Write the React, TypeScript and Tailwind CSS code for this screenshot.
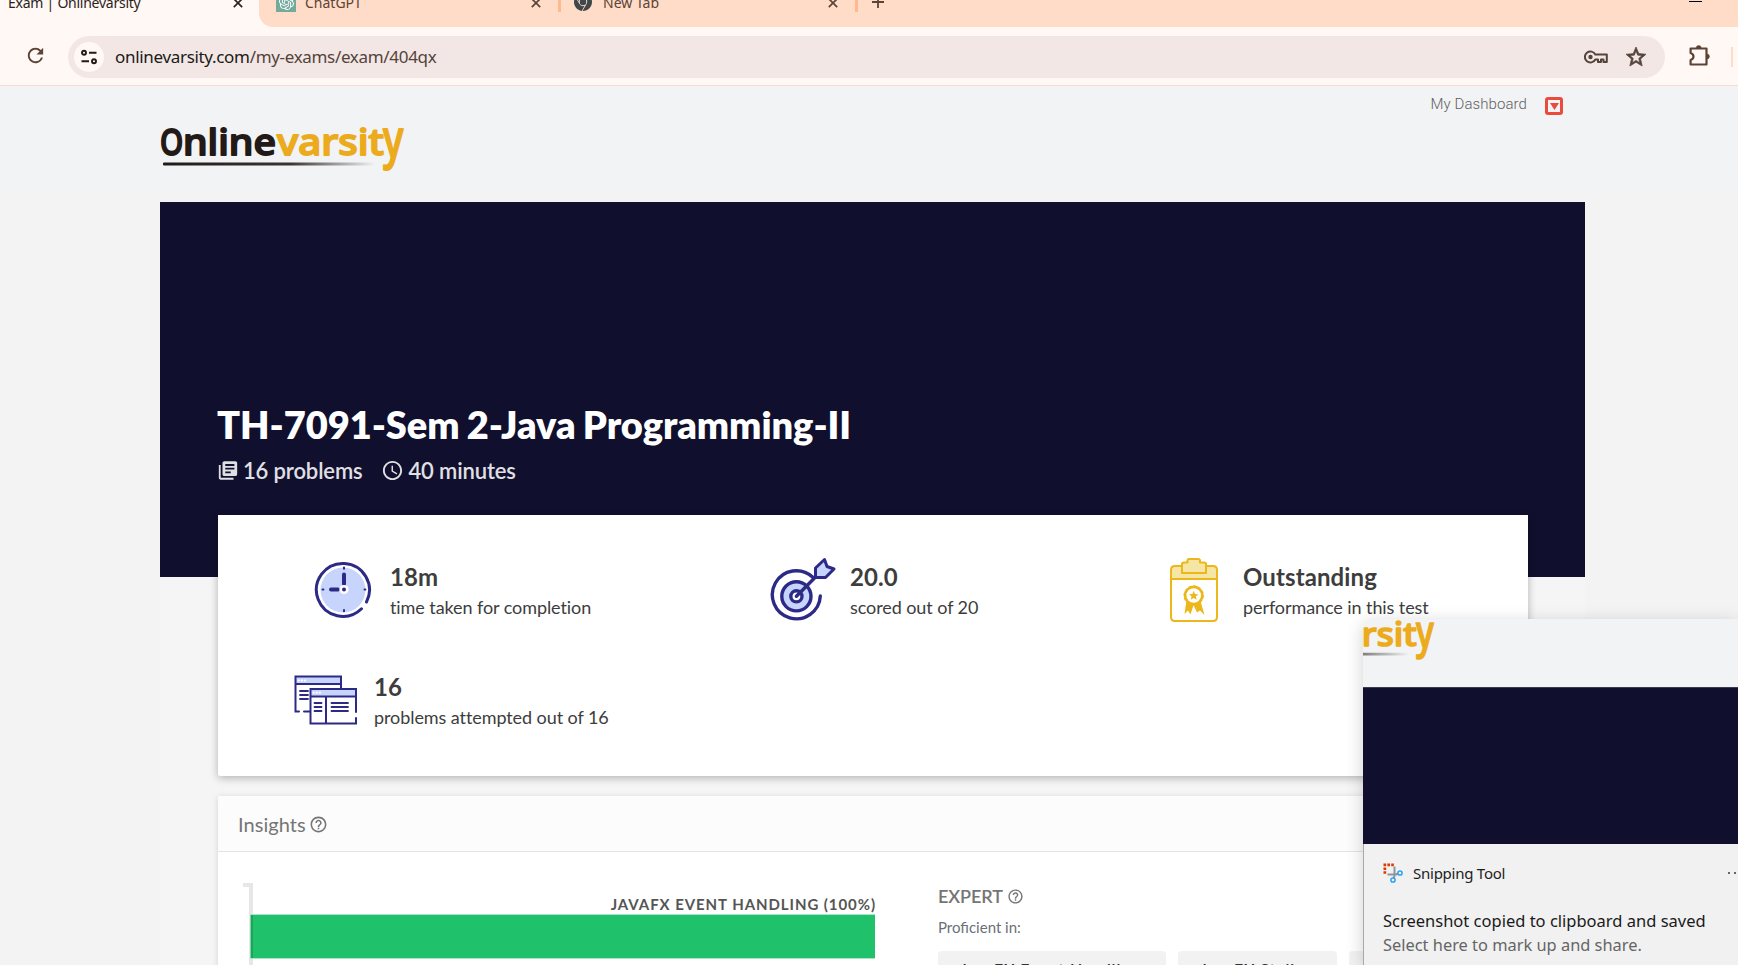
import type { ReactNode } from "react";
import { MdRefresh, MdStarOutline, MdLibraryBooks, MdAccessTime, MdHelpOutline } from "react-icons/md";
import { SiOpenai, SiGooglechrome } from "react-icons/si";

const UI = "font-['Noto_Sans',sans-serif]";

function CloseIcon({ className }: { className: string }) {
  return (
    <svg viewBox="0 0 10 10" className={className} fill="none" stroke="currentColor" strokeWidth="1.7">
      <path d="M0.8 0.8 9.2 9.2M9.2 0.8 0.8 9.2" />
    </svg>
  );
}

function Logo({ id, className }: { id: string; className: string }) {
  return (
    <svg viewBox="0 0 246 48" className={className}>
      <defs>
        <linearGradient id={id} x1="0" x2="1" y1="0" y2="0">
          <stop offset="0" stopColor="#231a17" />
          <stop offset="0.6" stopColor="#3a3432" />
          <stop offset="1" stopColor="#3a3432" stopOpacity="0" />
        </linearGradient>
      </defs>
      <g fontFamily="'Noto Sans', sans-serif" fontSize="37" fontWeight="500" strokeLinejoin="round" strokeWidth="1.8">
        <g fill="#231a17" stroke="#231a17">
          <text transform="translate(0 29.500) scale(0.8 1)">O</text>
          <text x="23" y="29.500" textLength="93" lengthAdjust="spacingAndGlyphs">nline</text>
        </g>
        <g fill="#ecab1d" stroke="#ecab1d">
          <text x="117" y="29.500" textLength="107" lengthAdjust="spacingAndGlyphs">varsit</text>
          <text transform="translate(223 31.500) scale(0.74 1)" fontSize="52">y</text>
        </g>
      </g>
      <rect x="3" y="37.5" width="212" height="3" rx="1" fill={`url(#${id})`} />
    </svg>
  );
}

function ClockIcon() {
  return (
    <svg viewBox="0 0 58 58" className="h-[58px] w-[58px]" fill="none" stroke="#2c2a86" strokeLinecap="round">
      <circle cx="29" cy="29" r="22.5" fill="#c7d5fd" stroke="none" />
      <path d="M47.5 47.8A26.5 26.5 0 1 1 52.500 41" strokeWidth="3" />
      <path d="M30 13.5V23M17 28.5H24" strokeWidth="4" />
      <path d="M30 6.5v1.2M30 49v1.2M8.500 28.5h.9M50.5 28.5h.9" strokeWidth="2" />
      <circle cx="30" cy="28.5" r="4.6" fill="#fff" stroke="none" />
      <circle cx="30" cy="28.5" r="2" fill="#2c2a86" stroke="none" />
    </svg>
  );
}

function TargetIcon() {
  return (
    <svg viewBox="0 0 66 66" className="h-[66px] w-[66px]" fill="none" stroke="#2c2a86" strokeWidth="3.4" strokeLinecap="round" strokeLinejoin="round">
      <path d="M42.5 20A24 24 0 1 0 50.3 39" />
      <circle cx="26.4" cy="39.3" r="14.6" fill="#c7d5fd" />
      <circle cx="26.4" cy="39.3" r="5.6" fill="#fff" />
      <path d="M26.4 39.3 46 19.5" />
      <path d="M45.5 20.5V11L54.5 2.5 57 9.5 64 12 55.5 20.5Z" fill="#c7d5fd" strokeWidth="3" />
    </svg>
  );
}

function ClipboardIcon() {
  return (
    <svg viewBox="0 0 48 66" className="h-[66px] w-[48px]" fill="none" stroke="#ecb71b" strokeWidth="2" strokeLinejoin="round">
      <path d="M1 22V13Q1 9 5 9H43Q47 9 47 13V22Z" fill="#f6e6a5" />
      <path d="M1 22V60Q1 64 5 64H43Q47 64 47 60V22Z" fill="#fff" />
      <path d="M12 16V7Q12 5.500 14 5.500H17.500V3.500Q17.500 2 19 2H28Q30 2 30 3.500V5.500H34Q36 5.500 36 7V16Z" fill="#f6e6a5" />
      <path d="M16.500 43 14.500 57 18 53.500 20.500 57.500 23.500 48 27 55.500 30 53.500 34.500 58 30.500 44Z" fill="#ecb71b" stroke="none" />
      <circle cx="23.700" cy="38.500" r="8.600" fill="#fff" strokeWidth="2.600" />
      <circle cx="23.700" cy="38.500" r="9.700" strokeWidth="1" strokeDasharray="3 2" />
      <path d="M23.700 33.800 25 37 28.400 37.200 25.800 39.400 26.600 42.700 23.700 40.900 20.800 42.700 21.600 39.400 19 37.200 22.400 37Z" fill="#ecb71b" stroke="none" />
    </svg>
  );
}

function WindowsIcon() {
  return (
    <svg viewBox="0 0 63 50" className="h-[50px] w-[63px]" fill="none" stroke="#2c2a86" strokeWidth="2" strokeLinecap="round">
      <path d="M2 2H47V9H2Z" fill="#c7d5fd" stroke="none" />
      <path d="M5 36.500H1.500V1.500H47V14M1.500 9H47M10 36.500H16" />
      <path d="M6 16h8M6 20h8M6 24h8" strokeWidth="1.800" />
      <path d="M16 14H62V48.500H16Z" fill="#fff" stroke="none" />
      <path d="M17 15H61V21H17Z" fill="#c7d5fd" stroke="none" />
      <path d="M62 37V14H16.500V48.500H62V43M16.500 21.500H62M32 21.500V48.500" />
      <path d="M20.500 28h7M20.500 32h7M20.500 36h7M37.500 28h16.500M37.500 32h16.500M37.500 36h16.500" strokeWidth="1.800" />
      <path d="M4.500 5.500h7M19.500 17.700h7" stroke="#fff" strokeWidth="1.800" strokeDasharray="0.5 2.600" />
    </svg>
  );
}

function SnipIcon() {
  return (
    <svg viewBox="0 0 20 20" className="h-5 w-5" fill="none">
      <path d="M0.500 1.800H3.200M4.400 1.800H7M8.200 1.800H10.800" stroke="#d83b01" strokeWidth="2.700" />
      <path d="M1.850 4.400V7M1.850 8.200V10.800" stroke="#d83b01" strokeWidth="2.700" />
      <path d="M11.500 3.500V13L10.500 15M4.500 11.500H13L15 10.500" stroke="#8d949b" strokeWidth="2" />
      <circle cx="17" cy="10" r="2.100" stroke="#2aa4ee" strokeWidth="1.500" />
      <circle cx="10" cy="17" r="2.100" stroke="#2aa4ee" strokeWidth="1.500" />
    </svg>
  );
}

function KeyIcon({ className }: { className: string }) {
  return (
    <svg viewBox="0 0 24 14" className={className} fill="none" stroke="currentColor" strokeWidth="2" strokeLinejoin="round">
      <path d="M11.300 4.500A5.500 5.500 0 1 0 11.300 9.500H14V12H17V9.500H19.500V12H22.800V4.500Z" />
      <circle cx="6.500" cy="7" r="2.200" fill="currentColor" stroke="none" />
    </svg>
  );
}

function Stat({ icon, value, label, gap }: { icon: ReactNode; value: string; label: string; gap: string }) {
  return (
    <div className={`flex items-start ${gap}`}>
      {icon}
      <div className="mt-[4px] whitespace-nowrap text-[#3d3d3d] [font-variant-ligatures:none]">
        <div className="text-[24px] font-bold leading-[32px] tracking-[0.1px]">{value}</div>
        <div className="text-[18px] leading-[28px] tracking-[-0.08px]">{label}</div>
      </div>
    </div>
  );
}

function BrowserChrome() {
  return (
    <header className={`${UI} h-[86px] shrink-0 border-b border-[#f6dcd4] bg-[#fff8f5]`}>
      <div className="flex h-[27px] overflow-hidden text-[14px] leading-[14px] text-[#5c4336]">
        <div className="flex w-[259px] shrink-0 justify-between pl-[8px] pr-[16px] text-[#2b2220]">
          <span className="-mt-[4px] tracking-[-0.25px]">Exam | Onlinevarsity</span>
          <CloseIcon className="-mt-[2px] h-[10px] w-[10px]" />
        </div>
        <div className="flex flex-1 rounded-bl-[14px] bg-[#ffdcc7]">
          <div className="flex h-[12px] w-[302px] border-r-[3px] border-[#ffb98c] pl-[17px]">
            <span className="-mt-[8px] flex h-[20px] w-[20px] items-center justify-center bg-[#74aa9c] text-white">
              <SiOpenai className="h-[15px] w-[15px]" />
            </span>
            <span className="-mt-[4px] ml-[9px] flex-1">ChatGPT</span>
            <CloseIcon className="-mt-[2px] mr-[17px] h-[10px] w-[10px]" />
          </div>
          <div className="flex h-[12px] w-[297px] border-r-[3px] border-[#ffb98c] pl-[13px]">
            <SiGooglechrome className="-mt-[7px] h-[18px] w-[18px] text-[#3f474b]" />
            <span className="-mt-[4px] ml-[11px] flex-1">New Tab</span>
            <CloseIcon className="-mt-[2px] mr-[17px] h-[10px] w-[10px]" />
          </div>
          <svg viewBox="0 0 12 12" className="-mt-[4px] ml-[14px] h-[12px] w-[12px]" stroke="currentColor" strokeWidth="1.800">
            <path d="M6 0V12M0 6H12" />
          </svg>
          <div className="ml-auto mr-[36px] mt-px h-px w-[13px] bg-black" />
        </div>
      </div>
      <div className="flex h-[58px] items-center pt-px">
        <MdRefresh className="-mt-[2px] ml-[24px] h-[23px] w-[23px] text-[#5c4336]" />
        <div className="ml-[21px] flex h-[42px] w-[1597px] items-center rounded-full bg-[#f2e7e4] pl-[6px] pr-[17px]">
          <div className="flex h-[30px] w-[30px] items-center justify-center rounded-full bg-[#fff8f5]">
            <svg viewBox="0 0 16 16" className="h-[16px] w-[16px]" fill="none" stroke="#231a17" strokeWidth="1.900">
              <circle cx="3" cy="3.700" r="2" />
              <path d="M8 3.700H15.500M0.500 12.300H8" />
              <circle cx="13" cy="12.300" r="2" />
            </svg>
          </div>
          <div className="ml-[11px] flex-1 text-[17px] leading-[24px] tracking-[-0.32px] text-[#54433b]">
            <span className="text-[#201a18]">onlinevarsity.com</span>/my-exams/exam/404qx
          </div>
          <KeyIcon className="mr-[16px] h-[14px] w-[24px] text-[#54433b]" />
          <MdStarOutline className="h-[24px] w-[24px] stroke-[#54433b] stroke-[0.7] text-[#54433b]" />
        </div>
        <svg viewBox="0 0 22 22" className="-mt-[2px] ml-[24px] h-[22px] w-[22px]" fill="none" stroke="#5c4336" strokeWidth="2.200" strokeLinejoin="round">
          <path d="M1.600 3.500H17.500V19.500H1.600V15Q4.500 14 4.500 11.500T1.600 8Z" />
          <path d="M7.200 3a2.500 2.500 0 0 1 5 0ZM18 9a2.500 2.500 0 0 1 0 5Z" fill="#5c4336" strokeWidth="0.500" />
        </svg>
        <div className="ml-[20px] h-[20px] w-[2px] bg-[#ffdcc7]" />
      </div>
    </header>
  );
}

function Toast() {
  return (
    <aside className={`${UI} absolute left-[1363px] top-[619px] h-[346px] w-[375px] overflow-hidden rounded-tl-[9px] bg-[#f1f1f1] shadow-[0_4px_18px_rgba(0,0,0,0.18)]`}>
      <div className="h-[68px] overflow-hidden bg-[#f2f3f5]">
        <Logo id="toastRule" className="-ml-[142px] mt-[1px] h-[42px] w-[215px]" />
      </div>
      <div className="h-[157px] border-t border-[#3b3b56] bg-[#10102e]" />
      <div className="h-[121px] border-l border-[#a9a9a9] pl-[19px] pt-[17px]">
        <div className="flex h-[24px] items-center">
          <SnipIcon />
          <span className="ml-[10px] flex-1 text-[15px] tracking-[-0.25px] text-[#1d1d1d]">Snipping Tool</span>
          <span className="mr-[2px] flex gap-[4px]">
            <i className="h-[2px] w-[2px] bg-[#666]" />
            <i className="h-[2px] w-[2px] bg-[#666]" />
          </span>
        </div>
        <div className="mt-[24px] whitespace-nowrap text-[16.500px] leading-[24px] text-[#1a1a1a]">Screenshot copied to clipboard and saved</div>
        <div className="whitespace-nowrap text-[16.400px] leading-[24px] text-[#656565]">Select here to mark up and share.</div>
      </div>
    </aside>
  );
}

export default function App() {
  return (
    <div className="relative flex h-[965px] w-[1738px] flex-col overflow-hidden bg-[#f3f3f3] font-[Lato,sans-serif]">
      <BrowserChrome />

      <div className="flex h-[104px] shrink-0 justify-between bg-[#f2f3f5] pl-[160px] pr-[175px]">
        <Logo id="headRule" className="mt-[39px] h-[48px] w-[246px]" />
        <div className="mt-[8px] flex h-[20px] items-center font-[Roboto,sans-serif] text-[15px] font-light tracking-[0.08px] text-[#5f5f5f]">
          My Dashboard
          <span className="ml-[18px] mt-[4px] flex h-[18px] w-[18px] items-center justify-center rounded-[3px] border-[3px] border-[#e94b3c]">
            <svg viewBox="0 0 9 7" className="h-[7px] w-[9px] shrink-0" fill="#e94b3c"><path d="M0 0H9L4.500 7Z" /></svg>
          </span>
        </div>
      </div>

      <main className="ml-[160px] mt-[12px] h-[763px] w-[1425px] shrink-0 bg-[#f5f5f5]">
        <section className="h-[375px] bg-[#10102e] pl-[57px] pt-[198px] text-white">
          <h1 className="whitespace-nowrap text-[38px] font-extrabold leading-[48px] tracking-[-0.05px] [word-spacing:-1.5px]">TH-7091-Sem 2-Java Programming-II</h1>
          <div className="mt-[7px] flex h-[30px] items-center text-[22px] font-semibold tracking-[-0.14px] text-[#e0e0e4]">
            <MdLibraryBooks className="mr-[4px] h-[23px] w-[22px]" />
            16 problems
            <MdAccessTime className="ml-[19px] mr-[4px] h-[23px] w-[23px]" />
            40 minutes
          </div>
        </section>

        <section className="relative -mt-[62px] ml-[58px] h-[261px] w-[1310px] rounded-b-[2px] bg-white shadow-[0_2px_8px_rgba(0,0,0,0.28)]">
          <div className="grid grid-cols-[456px_400px_1fr] pl-[96px] pt-[42px]">
            <Stat gap="gap-[18px] [&>svg]:mt-[4px]" icon={<ClockIcon />} value="18m" label="time taken for completion" />
            <Stat gap="gap-[14px]" icon={<TargetIcon />} value="20.0" label="scored out of 20" />
            <Stat gap="gap-[25px]" icon={<ClipboardIcon />} value="Outstanding" label="performance in this test" />
          </div>
          <div className="mt-[44px] pl-[76px]">
            <Stat gap="gap-[17px] [&>svg]:mt-[8px]" icon={<WindowsIcon />} value="16" label="problems attempted out of 16" />
          </div>
        </section>

        <section className="ml-[58px] mt-[20px] h-[180px] w-[1310px] bg-white shadow-[0_1px_6px_rgba(0,0,0,0.14)]">
          <div className="flex h-[56px] items-center border-b border-[#e3e3e3] bg-[#fcfcfc] pl-[20px] text-[20px] tracking-[0.05px] text-[#757575]">
            Insights
            <MdHelpOutline className="ml-[3px] mt-[2px] h-[19px] w-[19px]" />
          </div>
          <div className="flex">
            <div className="w-[657px] shrink-0 pl-[25px] pt-[31px]">
              <div className="flex">
                <div className="h-[4px] w-[6px] bg-[#e7e7e7]" />
                <div className="h-[82px] w-[4px] bg-[#e7e7e7]" />
              </div>
              <div className="relative -mt-[71px] pl-[7px]">
                <div className="whitespace-nowrap text-right text-[15px] font-bold leading-[20px] tracking-[0.93px] text-[#555]">
                  <span className="mr-[-1px]">JAVAFX EVENT HANDLING (100%)</span>
                </div>
                <div className="flex h-[45px] border-y border-[#a9e6c5] bg-[#1fc16b]">
                  <div className="w-[3px] border-l border-[#7cd6a5] bg-[#1ea35d]" />
                </div>
              </div>
            </div>
            <div className="pl-[63px] pt-[31px]">
              <div className="flex h-[26px] items-center text-[18px] font-semibold tracking-[-0.1px] text-[#757575]">
                EXPERT
                <MdHelpOutline className="ml-[4px] h-[17px] w-[17px]" />
              </div>
              <div className="mt-[8px] text-[15px] leading-[20px] text-[#6b7078]">Proficient in:</div>
              <div className="mt-[14px] flex gap-[12px] whitespace-nowrap text-[16px] font-semibold leading-[20px] text-[#333]">
                <div className="h-[40px] w-[228px] rounded-[4px] bg-[#f2f2f2] pl-[22px] pt-[8px] tracking-[0.9px]">JavaFX Event Handling</div>
                <div className="h-[40px] w-[159px] rounded-[4px] bg-[#f2f2f2] pl-[22px] pt-[8px] tracking-[0.9px]">JavaFX Styling</div>
                <div className="h-[40px] w-[100px] rounded-[4px] bg-[#f2f2f2]" />
              </div>
            </div>
          </div>
        </section>
      </main>
      <Toast />
    </div>
  );
}
